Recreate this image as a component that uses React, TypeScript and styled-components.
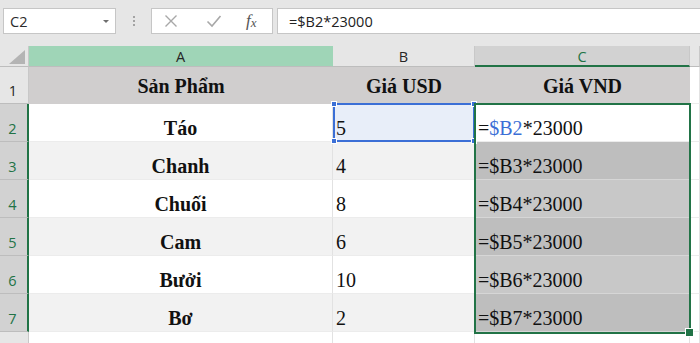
import styled, { createGlobalStyle } from "styled-components";

const GlobalStyle = createGlobalStyle`
  html, body {
    margin: 0;
    padding: 0;
    background: #ffffff;
  }
  body {
    font-family: "Open Sans", "Liberation Sans", sans-serif;
  }
`;

type Row = {
  name: string;
  usd: string;
};

const rows: Row[] = [
  { name: "Táo", usd: "5" },
  { name: "Chanh", usd: "4" },
  { name: "Chuối", usd: "8" },
  { name: "Cam", usd: "6" },
  { name: "Bưởi", usd: "10" },
  { name: "Bơ", usd: "2" },
];

const GREEN = "#217346";
const BLUE = "#3b6fd6";

const App = () => {
  return (
    <>
      <GlobalStyle />
      <Window>
        <Toolbar>
          <NameBox>
            <span>C2</span>
            <Caret />
          </NameBox>
          <Grip>
            <i />
            <i />
            <i />
          </Grip>
          <FxBox>
            <IconSlot>
              <svg width="14" height="14" viewBox="0 0 14 14">
                <path d="M1.5 1.5 L12.5 12.5 M12.5 1.5 L1.5 12.5" stroke="#a8a8a8" strokeWidth="1.4" fill="none" />
              </svg>
            </IconSlot>
            <IconSlot>
              <svg width="16" height="14" viewBox="0 0 16 14">
                <path d="M1.5 7.5 L6 12 L14.5 2" stroke="#a8a8a8" strokeWidth="1.6" fill="none" />
              </svg>
            </IconSlot>
            <FxLabel>
              f<sub>x</sub>
            </FxLabel>
          </FxBox>
          <FormulaInput>=$B2*23000</FormulaInput>
        </Toolbar>

        <Sheet>
          <Corner>
            <svg width="16" height="14" viewBox="0 0 16 14">
              <polygon points="16,0 16,14 0,14" fill="#b4b4b4" />
            </svg>
          </Corner>
          <ColHead $variant="hover">A</ColHead>
          <ColHead $variant="plain">B</ColHead>
          <ColHead $variant="active">C</ColHead>
          <ColHead $variant="plain" />

          <RowHead $selected={false}>1</RowHead>
          <TitleCell>Sản Phẩm</TitleCell>
          <TitleCell>Giá USD</TitleCell>
          <TitleCell>Giá VND</TitleCell>
          <Cell $shade="white" />

          {rows.map((r, i) => {
            const n = i + 2;
            const striped = i % 2 === 1;
            const base = striped ? "stripe" : "white";
            return [
              <RowHead key={`h${n}`} $selected>
                {n}
              </RowHead>,
              <NameCell key={`a${n}`} $shade={base}>
                {r.name}
              </NameCell>,
              <Cell key={`b${n}`} $shade={n === 2 ? "ref" : base}>
                {r.usd}
              </Cell>,
              <Cell key={`c${n}`} $shade={n === 2 ? "white" : striped ? "selDark" : "selLight"}>
                {n === 2 ? (
                  <>
                    =<Ref>$B2</Ref>*23000
                  </>
                ) : (
                  `=$B${n}*23000`
                )}
              </Cell>,
              <Cell key={`d${n}`} $shade="white" />,
            ];
          })}

          <RowHead $selected={false}>8</RowHead>
          <Cell $shade="white" />
          <Cell $shade="white" />
          <Cell $shade="white" />
          <Cell $shade="white" />

          <RefBox>
            <Handle $x="left" $y="top" />
            <Handle $x="right" $y="top" />
            <Handle $x="left" $y="bottom" />
            <Handle $x="right" $y="bottom" />
          </RefBox>
          <Selection>
            <FillHandle />
          </Selection>
        </Sheet>
      </Window>
    </>
  );
};

const Window = styled.div`
  width: 700px;
  height: 343px;
  overflow: hidden;
  background: #e6e6e6;
  display: flex;
  flex-direction: column;
`;

const Toolbar = styled.div`
  flex: 0 0 46px;
  height: 46px;
  box-sizing: border-box;
  padding: 8px 0 0 3px;
  display: flex;
  align-items: flex-start;
  background: #e6e6e6;
`;

const NameBox = styled.div`
  width: 113px;
  height: 26px;
  box-sizing: border-box;
  background: #fff;
  border: 1px solid #c6c6c6;
  display: flex;
  align-items: center;
  justify-content: space-between;
  padding: 0 6px 0 6px;
  font-size: 14.5px;
  color: #2b2b2b;
`;

const Caret = styled.span`
  width: 0;
  height: 0;
  border-left: 3.5px solid transparent;
  border-right: 3.5px solid transparent;
  border-top: 3.5px solid #6e6e6e;
`;

const Grip = styled.div`
  width: 35px;
  height: 26px;
  display: flex;
  flex-direction: column;
  align-items: center;
  justify-content: center;
  gap: 2px;

  i {
    display: block;
    width: 2px;
    height: 2px;
    background: #a3a3a3;
  }
`;

const FxBox = styled.div`
  width: 122px;
  height: 26px;
  box-sizing: border-box;
  background: #fff;
  border: 1px solid #c6c6c6;
  display: flex;
  align-items: center;
  padding-left: 12px;
`;

const IconSlot = styled.span`
  width: 42px;
  display: flex;
  align-items: center;
  justify-content: flex-start;
`;

const FxLabel = styled.span`
  font-family: "Liberation Serif", serif;
  font-style: italic;
  font-size: 17px;
  color: #555;
  margin-left: -2px;

  sub {
    font-size: 13px;
    vertical-align: baseline;
    position: relative;
    top: 1px;
  }
`;

const FormulaInput = styled.div`
  flex: 1;
  margin-left: 4px;
  height: 26px;
  box-sizing: border-box;
  background: #fff;
  border: 1px solid #c6c6c6;
  border-right: none;
  display: flex;
  align-items: center;
  padding-left: 11px;
  font-size: 14.5px;
  color: #222;
`;

const Sheet = styled.div`
  position: relative;
  flex: 1 1 auto;
  min-height: 0;
  overflow: hidden;
  display: grid;
  grid-template-columns: 29px 304px 142px 215px 1fr;
  grid-template-rows: 21px 37px repeat(6, 38px) 30px;
  background: #fff;
`;

const Corner = styled.div`
  background: #e6e6e6;
  border-right: 1px solid #c8c8c8;
  border-bottom: 1px solid #bdbdbd;
  box-sizing: border-box;
  display: flex;
  align-items: flex-end;
  justify-content: flex-end;
  padding: 0 3px 2px 0;
`;

const colHeadBg = {
  hover: "#9fd5b7",
  plain: "#e6e6e6",
  active: "#d2d2d2",
};

const ColHead = styled.div<{ $variant: "hover" | "plain" | "active" }>`
  box-sizing: border-box;
  background: ${(p) => colHeadBg[p.$variant]};
  border-right: 1px solid ${(p) => (p.$variant === "hover" ? "#9fd5b7" : "#c8c8c8")};
  border-bottom: ${(p) => (p.$variant === "active" ? `2px solid ${GREEN}` : "1px solid #bdbdbd")};
  color: ${(p) => (p.$variant === "active" ? GREEN : "#262626")};
  font-size: 14.5px;
  display: flex;
  align-items: center;
  justify-content: center;
  padding-top: 1px;
`;

const RowHead = styled.div<{ $selected: boolean }>`
  box-sizing: border-box;
  background: ${(p) => (p.$selected ? "#d2d2d2" : "#e6e6e6")};
  border-right: ${(p) => (p.$selected ? `2px solid ${GREEN}` : "1px solid #c8c8c8")};
  border-bottom: 1px solid #bdbdbd;
  color: ${(p) => (p.$selected ? GREEN : "#262626")};
  font-size: 14.5px;
  display: flex;
  align-items: flex-end;
  justify-content: center;
  padding: 0 2px 2px 0;
  line-height: 20px;
`;

const TitleCell = styled.div`
  background: #d0cece;
  font-family: "Liberation Serif", serif;
  font-weight: bold;
  font-size: 20px;
  color: #111;
  display: flex;
  align-items: center;
  justify-content: center;
  padding-top: 2px;
`;

const shades = {
  white: "#ffffff",
  stripe: "#f2f2f2",
  ref: "#e8eef9",
  selLight: "#c8c8c8",
  selDark: "#bebebe",
};

const Cell = styled.div<{ $shade: keyof typeof shades }>`
  box-sizing: border-box;
  background: ${(p) => shades[p.$shade]};
  border-right: 1px solid #e2e2e2;
  border-bottom: 1px solid ${(p) => (p.$shade.startsWith("sel") ? "#d6d6d6" : "#ececec")};
  font-family: "Liberation Serif", serif;
  font-size: 20px;
  color: #111;
  display: flex;
  align-items: flex-end;
  padding: 0 0 1px 3px;
  white-space: nowrap;
`;

const NameCell = styled(Cell)`
  font-weight: bold;
  justify-content: center;
  padding-left: 0;
`;

const Ref = styled.span`
  color: ${BLUE};
`;

const RefBox = styled.div`
  position: absolute;
  left: 333px;
  top: 57px;
  width: 142px;
  height: 39px;
  box-sizing: border-box;
  border: 2px solid ${BLUE};
  pointer-events: none;
`;

const Handle = styled.span<{ $x: "left" | "right"; $y: "top" | "bottom" }>`
  position: absolute;
  width: 6px;
  height: 6px;
  background: ${BLUE};
  border: 1px solid #fff;
  box-sizing: border-box;
  ${(p) => p.$x}: -4px;
  ${(p) => p.$y}: -4px;
`;

const Selection = styled.div`
  position: absolute;
  left: 474px;
  top: 57px;
  width: 217px;
  height: 231px;
  box-sizing: border-box;
  border: 2px solid ${GREEN};
  pointer-events: none;
`;

const FillHandle = styled.span`
  position: absolute;
  right: -5px;
  bottom: -5px;
  width: 7px;
  height: 7px;
  background: ${GREEN};
  border: 1px solid #fff;
`;

export default App;
